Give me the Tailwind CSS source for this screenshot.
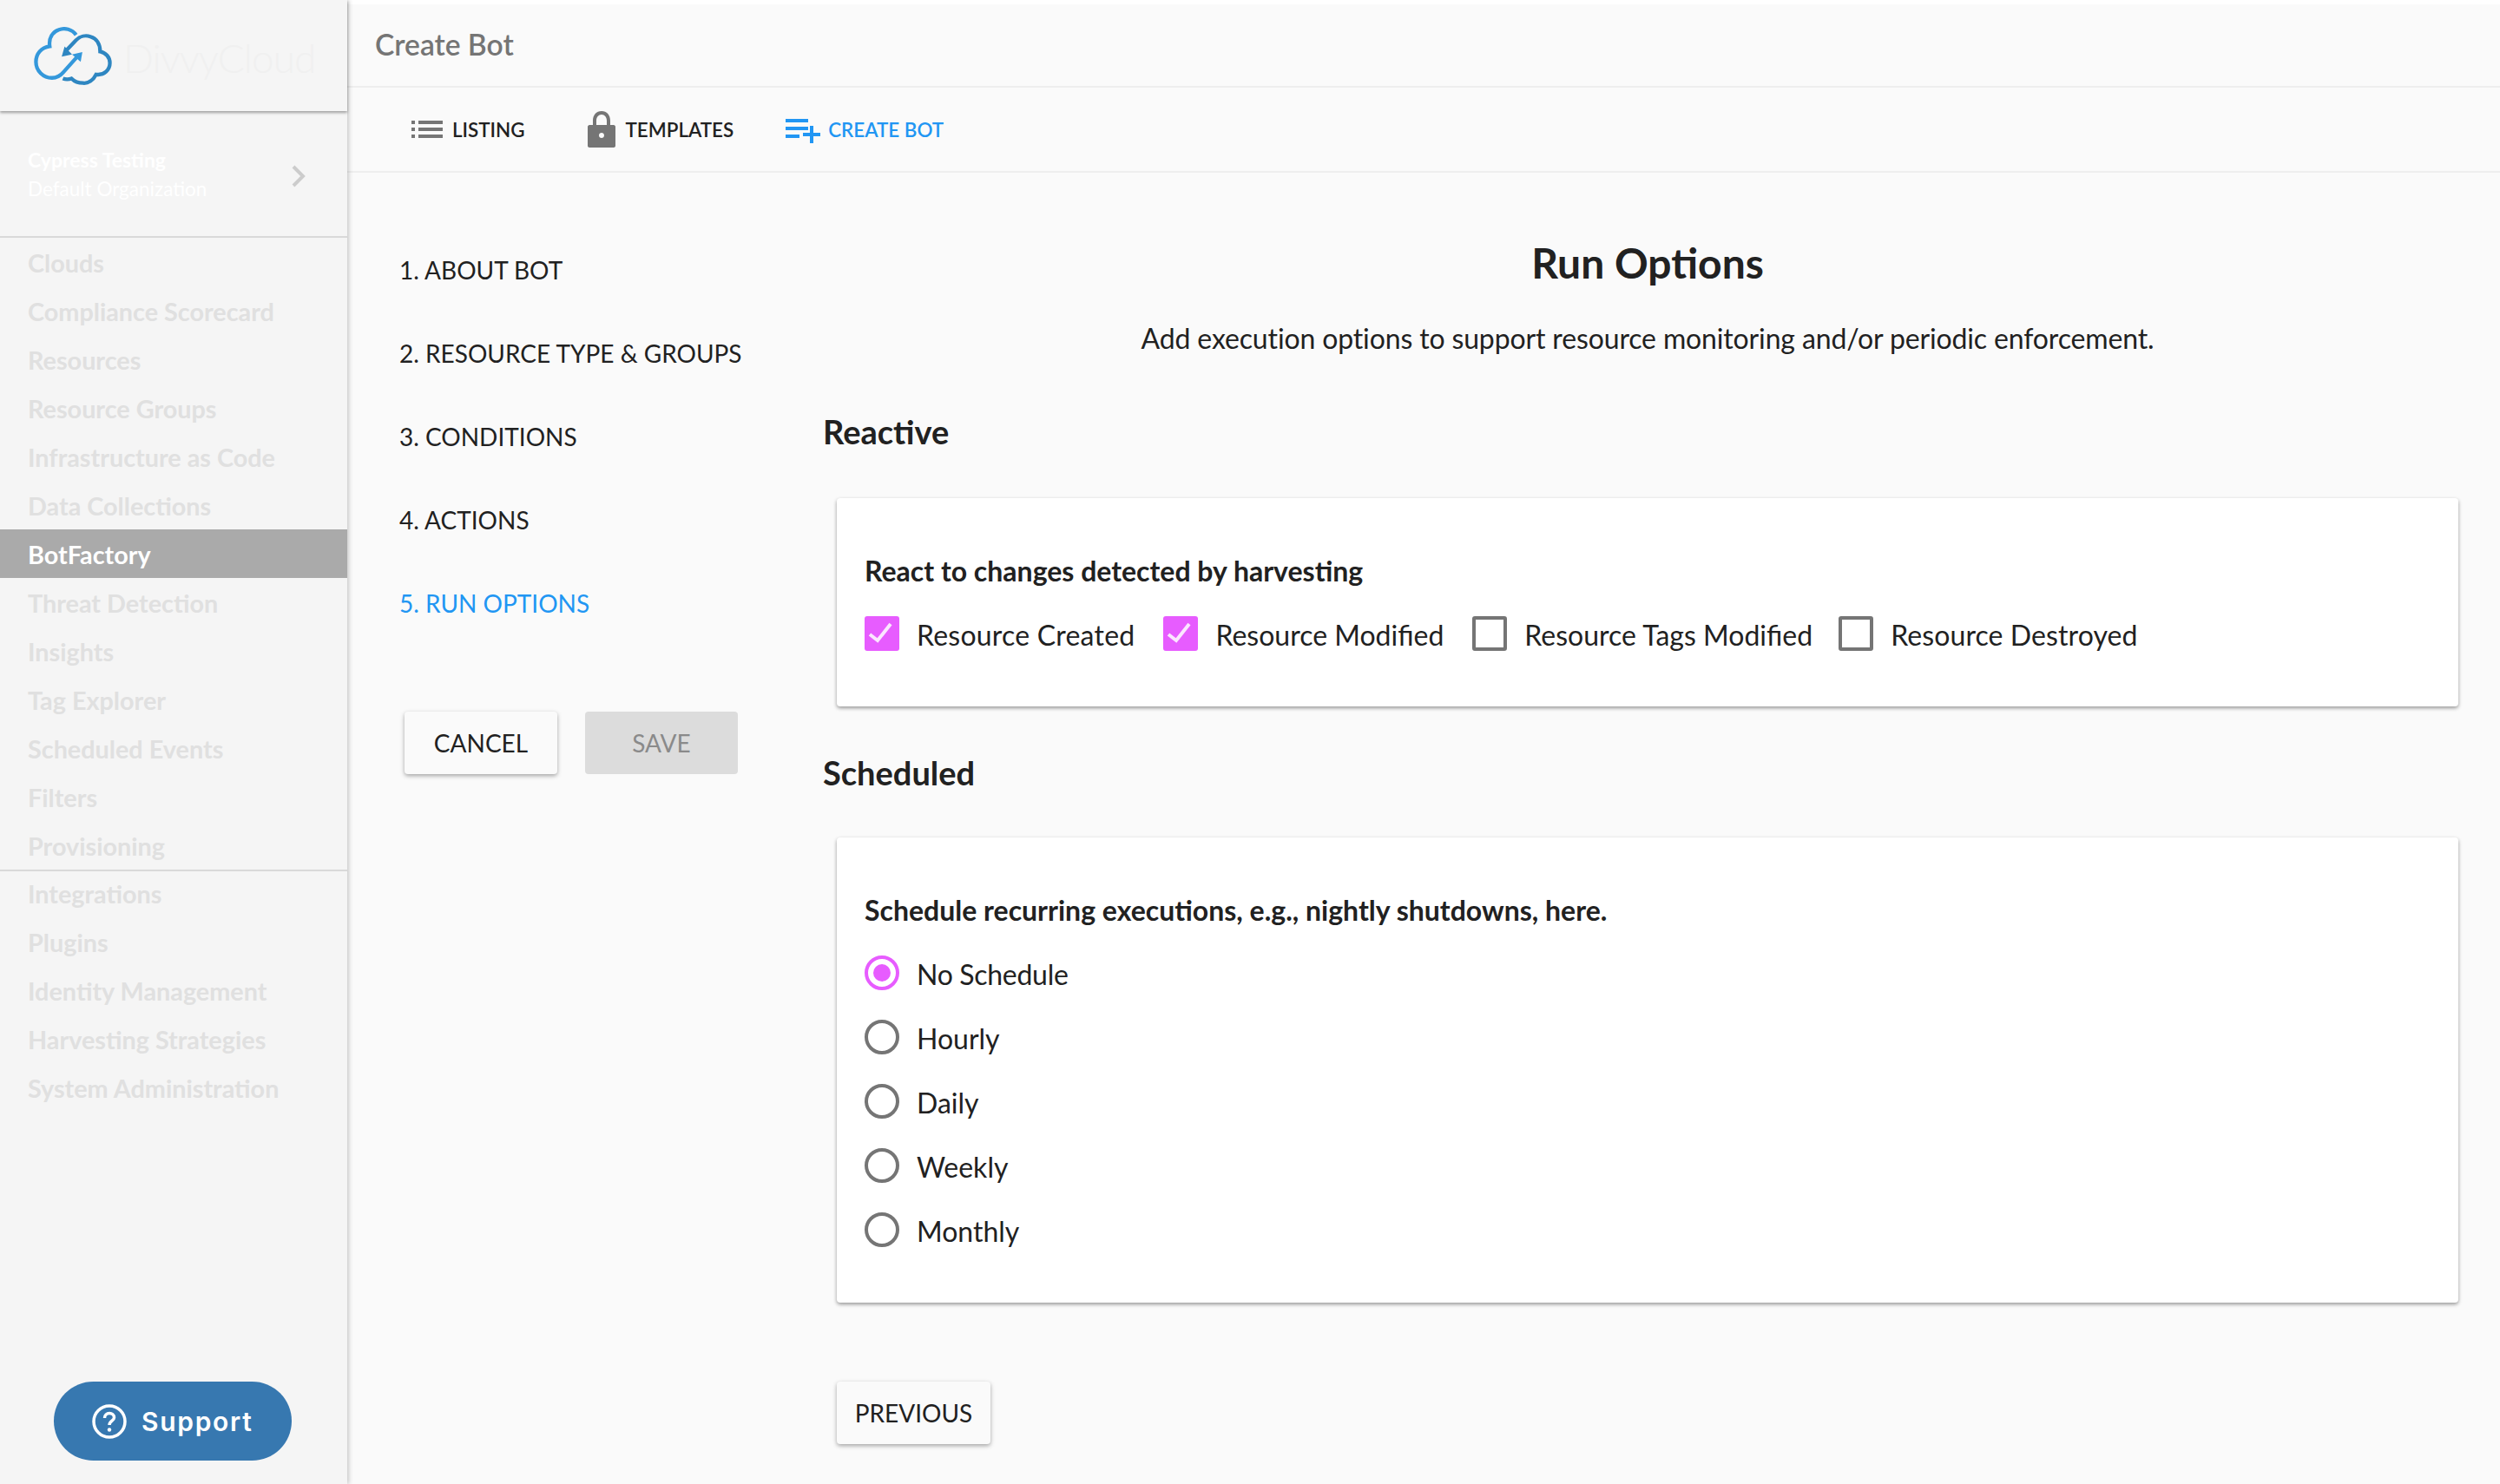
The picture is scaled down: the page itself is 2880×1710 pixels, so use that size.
<!DOCTYPE html>
<html lang="en">
<head>
<meta charset="UTF-8">
<title>Create Bot</title>
<script src="https://cdn.jsdelivr.net/npm/@tailwindcss/browser@4"></script>
</head>
<body class="h-screen overflow-hidden bg-white font-['Lato',sans-serif] text-[#212121]">
<div class="flex h-[1710px]">
    <!-- sidebar -->
    <aside class="relative z-10 flex w-[400px] shrink-0 flex-col bg-[#f5f5f5] shadow-[2px_0_5px_rgba(0,0,0,0.2)]">
        <div class="flex h-[128px] items-start pl-[37px] pt-[31px] shadow-[0_2px_3px_rgba(0,0,0,0.35)]">
            <svg class="h-[68px] w-[94px] shrink-0" viewBox="112 92 278 206" fill="none" stroke-width="13" stroke-linecap="butt">
                <path stroke="#3498db" d="M262 120C248 100 222 94 202 102C180 110 166 130 170 160C140 164 122 186 122 214C122 246 148 270 178 270C196 270 208 262 218 250L268 194"/>
                <path fill="#3498db" d="M248 188L284 180L278 214Z"/>
                <path stroke="#2e86c1" d="M226 176L262 138C276 124 296 120 312 126C334 132 346 152 346 178C366 182 380 198 380 218C380 242 360 262 332 258C322 278 304 290 286 288C268 288 256 282 246 272C236 276 226 276 216 272"/>
                <path fill="#2e86c1" d="M212 196L222 160L248 188Z"/>
            </svg>
            <span class="ml-[11px] mt-[6px] text-[46px] leading-[60px] font-light tracking-[-1px] text-[#f0f0f0]">DivvyCloud</span>
        </div>
        <div class="flex h-[146px] items-center justify-between border-b-2 border-[#d9d9d9] pl-[32px] pr-[48px] pb-[0px] pt-[2px]">
            <div class="text-[22.5px] leading-[34px] text-white">
                <div class="text-[23px] font-bold">Cypress Testing</div>
                <div>Default Organization</div>
            </div>
            <svg class="mt-[4px] h-[26px] w-[16px]" viewBox="0 0 16 26" fill="none" stroke="#cccccc" stroke-width="4"><path d="M2 2L13 13L2 24"/></svg>
        </div>
        <nav class="text-[28.8px] font-bold leading-[58px] text-[#e0e0e0]">
            <a class="block h-[56px] pl-[32px]">Clouds</a>
            <a class="block h-[56px] pl-[32px]">Compliance Scorecard</a>
            <a class="block h-[56px] pl-[32px]">Resources</a>
            <a class="block h-[56px] pl-[32px]">Resource Groups</a>
            <a class="block h-[56px] pl-[32px]">Infrastructure as Code</a>
            <a class="block h-[56px] pl-[32px]">Data Collections</a>
            <a class="block h-[56px] bg-[#aaaaaa] pl-[32px] text-white">BotFactory</a>
            <a class="block h-[56px] pl-[32px]">Threat Detection</a>
            <a class="block h-[56px] pl-[32px]">Insights</a>
            <a class="block h-[56px] pl-[32px]">Tag Explorer</a>
            <a class="block h-[56px] pl-[32px]">Scheduled Events</a>
            <a class="block h-[56px] pl-[32px]">Filters</a>
            <a class="block h-[56px] pl-[32px]">Provisioning</a>
            <div class="border-t-2 border-[#d9d9d9] leading-[52px]">
                <a class="block h-[56px] pl-[32px]">Integrations</a>
                <a class="block h-[56px] pl-[32px]">Plugins</a>
                <a class="block h-[56px] pl-[32px]">Identity Management</a>
                <a class="block h-[56px] pl-[32px]">Harvesting Strategies</a>
                <a class="block h-[56px] pl-[32px]">System Administration</a>
            </div>
        </nav>
        <button class="absolute left-[62px] top-[1592px] flex h-[91px] w-[274px] items-center rounded-full bg-[#3778b0] pl-[44px] font-['Inter',sans-serif] text-[30px] font-semibold tracking-[1.7px] text-white">
            <svg class="mr-[17px] h-[40px] w-[40px]" viewBox="0 0 40 40" fill="none" stroke="white" stroke-width="3.5">
                <circle cx="20" cy="20" r="18"/>
                <path stroke-width="3.5" d="M14.5 16C14.5 12.5 17 10.5 20 10.5C23 10.5 25.5 12.5 25.5 15.5C25.5 19 20 19.5 20 24"/>
                <circle cx="20" cy="29.5" r="2.2" fill="white" stroke="none"/>
            </svg>
            <span class="mt-[2px]">Support</span>
        </button>
    </aside>

    <!-- main -->
    <main class="mt-[5px] flex-1 bg-[#fafafa]">
        <div class="flex h-[96px] items-center border-b-2 border-[#eeeeee] pl-[32px] pb-[2px]">
            <h1 class="text-[33.6px] font-semibold text-[#757575]">Create Bot</h1>
        </div>
        <div class="flex h-[98px] items-center border-b-2 border-[#eeeeee] pl-[74px] text-[22.4px] font-semibold uppercase">
            <a class="flex items-center">
                <svg class="mr-[11px] h-[20px] w-[36px]" viewBox="0 0 36 20" fill="#757575">
                    <rect x="0" y="0" width="4" height="4"/><rect x="8" y="0" width="28" height="4"/>
                    <rect x="0" y="8" width="4" height="4"/><rect x="8" y="8" width="28" height="4"/>
                    <rect x="0" y="16" width="4" height="4"/><rect x="8" y="16" width="28" height="4"/>
                </svg>
                <span class="mt-[2px]">Listing</span>
            </a>
            <a class="ml-[72px] flex items-center">
                <svg class="mr-[12px] h-[42px] w-[32px]" viewBox="0 0 32 42" fill="#757575">
                    <path d="M2 16H6V11C6 4.5 10 0 16 0C22 0 26 4.5 26 11V16H30C31 16 32 17 32 18V40C32 41 31 42 30 42H2C1 42 0 41 0 40V18C0 17 1 16 2 16ZM10 16H22V11C22 7 19.5 4 16 4C12.5 4 10 7 10 11ZM16 25C14.3 25 13 26.3 13 28C13 29.7 14.3 31 16 31C17.7 31 19 29.7 19 28C19 26.3 17.7 25 16 25Z" fill-rule="evenodd"/>
                </svg>
                <span class="mt-[2px]">Templates</span>
            </a>
            <a class="ml-[60px] flex items-center text-[#2196f3]">
                <svg class="mr-[9px] mt-[4px] h-[28px] w-[40px]" viewBox="0 0 40 28" fill="#2196f3">
                    <rect x="0" y="0" width="26" height="4"/><rect x="0" y="9" width="26" height="4"/><rect x="0" y="18" width="16" height="4"/>
                    <rect x="20" y="16" width="20" height="4"/><rect x="28" y="8" width="4" height="20"/>
                </svg>
                <span class="mt-[2px]">Create Bot</span>
            </a>
        </div>

        <div class="flex">
            <!-- steps -->
            <div class="w-[548px] shrink-0 pl-[60px] pt-[64px]">
                <ol class="text-[28px] uppercase leading-[96px]">
                    <li>1. About Bot</li>
                    <li>2. Resource Type &amp; Groups</li>
                    <li>3. Conditions</li>
                    <li>4. Actions</li>
                    <li class="text-[#2196f3]">5. Run Options</li>
                </ol>
                <div class="ml-[6px] mt-[77px] flex gap-[32px] text-[28px]">
                    <button class="h-[72px] w-[176px] rounded-[4px] bg-[#fafafa] uppercase shadow-[0_2px_5px_rgba(0,0,0,0.35)]">Cancel</button>
                    <button class="h-[72px] w-[176px] rounded-[4px] bg-[#dcdcdc] uppercase text-[#8a8a8a]">Save</button>
                </div>
            </div>

            <!-- form -->
            <div class="flex-1 pr-[48px]">
                <div class="pl-[16px] text-center">
                    <h2 class="mt-[75px] text-[48px] leading-[58px] font-bold">Run Options</h2>
                    <p class="mt-[38px] text-[32px] leading-[40px] tracking-[-0.14px]">Add execution options to support resource monitoring and/or periodic enforcement.</p>
                </div>
                <h3 class="mt-[62px] text-[38px] leading-[50px] font-bold">Reactive</h3>
                <section class="ml-[16px] mt-[52px] h-[240px] rounded-[4px] bg-white px-[32px] pt-[64px] shadow-[0_2px_4px_rgba(0,0,0,0.4)]">
                    <h4 class="text-[32px] leading-[40px] font-bold">React to changes detected by harvesting</h4>
                    <div class="mt-[32px] flex h-[40px] items-center text-[32px] leading-[40px]">
                        <span class="h-[40px] w-[40px] rounded-[3px] bg-[#e75cff]">
                            <svg class="h-[40px] w-[40px]" viewBox="0 0 40 40" fill="none" stroke="#fbe6ff" stroke-width="4"><path d="M6 21L15 28L30 9"/></svg>
                        </span>
                        <span class="ml-[20px] mt-[4px] tracking-[0.22px]">Resource Created</span>
                        <span class="ml-[33px] h-[40px] w-[40px] rounded-[3px] bg-[#e75cff]">
                            <svg class="h-[40px] w-[40px]" viewBox="0 0 40 40" fill="none" stroke="#fbe6ff" stroke-width="4"><path d="M6 21L15 28L30 9"/></svg>
                        </span>
                        <span class="ml-[20px] mt-[4px]">Resource Modified</span>
                        <span class="ml-[33px] h-[40px] w-[40px] rounded-[3px] border-4 border-[#757575]"></span>
                        <span class="ml-[20px] mt-[4px]">Resource Tags Modified</span>
                        <span class="ml-[30px] h-[40px] w-[40px] rounded-[3px] border-4 border-[#757575]"></span>
                        <span class="ml-[20px] mt-[4px] tracking-[0.1px]">Resource Destroyed</span>
                    </div>
                </section>
                <h3 class="mt-[51px] text-[38px] leading-[50px] font-bold">Scheduled</h3>
                <section class="ml-[16px] mt-[50px] h-[536px] rounded-[4px] bg-white px-[32px] pt-[64px] shadow-[0_2px_4px_rgba(0,0,0,0.4)]">
                    <h4 class="text-[32px] leading-[40px] font-bold">Schedule recurring executions, e.g., nightly shutdowns, here.</h4>
                    <div class="mt-[32px] flex flex-col gap-[34px] text-[32px] leading-[40px]">
                        <label class="flex h-[40px] items-center">
                            <span class="flex h-[40px] w-[40px] items-center justify-center rounded-full border-4 border-[#e75cff]"><span class="h-[20px] w-[20px] rounded-full bg-[#e75cff]"></span></span>
                            <span class="ml-[20px] mt-[4px] tracking-[-0.3px]">No Schedule</span>
                        </label>
                        <label class="flex h-[40px] items-center"><span class="h-[40px] w-[40px] rounded-full border-4 border-[#757575]"></span><span class="ml-[20px] mt-[4px]">Hourly</span></label>
                        <label class="flex h-[40px] items-center"><span class="h-[40px] w-[40px] rounded-full border-4 border-[#757575]"></span><span class="ml-[20px] mt-[4px]">Daily</span></label>
                        <label class="flex h-[40px] items-center"><span class="h-[40px] w-[40px] rounded-full border-4 border-[#757575]"></span><span class="ml-[20px] mt-[4px]">Weekly</span></label>
                        <label class="flex h-[40px] items-center"><span class="h-[40px] w-[40px] rounded-full border-4 border-[#757575]"></span><span class="ml-[20px] mt-[4px]">Monthly</span></label>
                    </div>
                </section>
                <button class="ml-[16px] mt-[91px] h-[72px] w-[177px] rounded-[4px] bg-[#fafafa] text-[28px] uppercase shadow-[0_2px_5px_rgba(0,0,0,0.35)]">Previous</button>
            </div>
        </div>
    </main>
</div>
</body>
</html>
